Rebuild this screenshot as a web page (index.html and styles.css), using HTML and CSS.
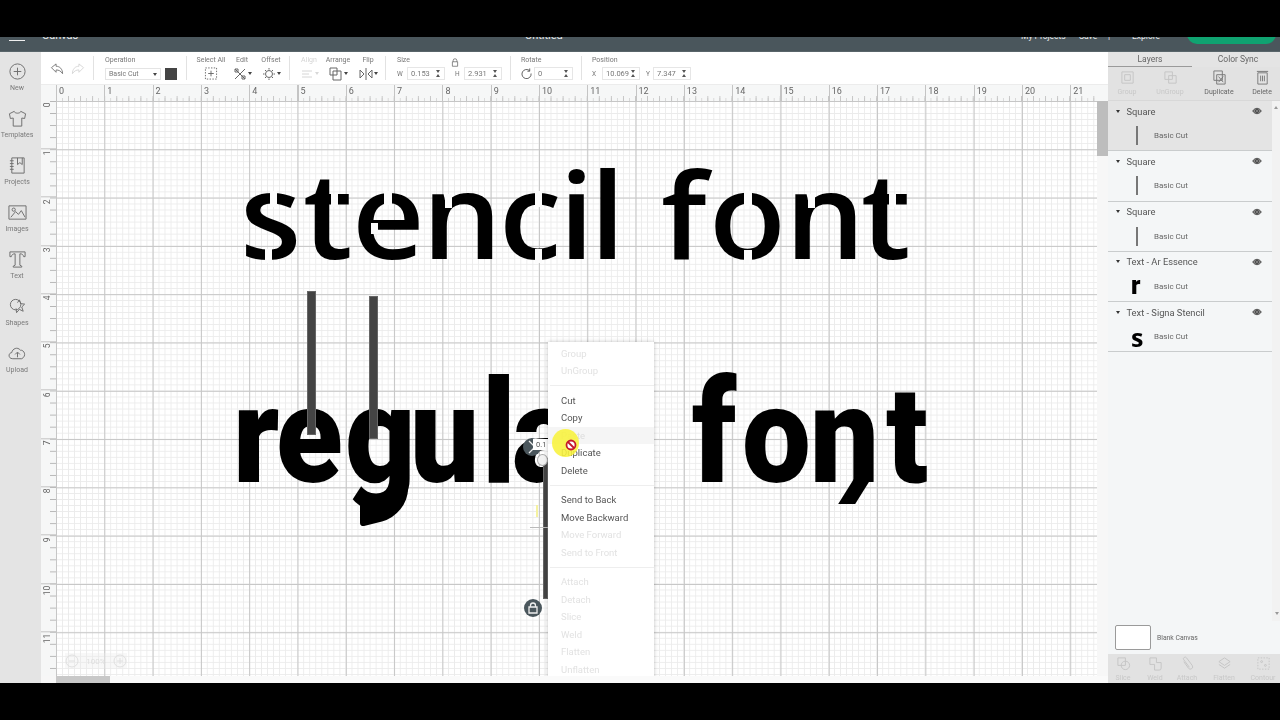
FILE: index.html
```html
<!DOCTYPE html>
<html lang="en">
<head>
<meta charset="utf-8">
<title>Canvas</title>
<link rel="stylesheet" href="styles.css">
</head>
<body>
<div class="app">
  <div class="letterbox-top"></div>
  <header class="topbar">
    <div class="burger"></div>
    <span class="tb-canvas">Canvas</span>
    <span class="tb-title">Untitled</span>
    <span class="tb-link tb-projects">My Projects</span>
    <span class="tb-link tb-save">Save</span>
    <span class="tb-link tb-pipe">|</span>
    <span class="tb-link tb-explore">Explore</span>
    <span class="tb-make">Make It</span>
  </header>
  <main class="main">
    <nav class="sidebar">
      <div class="side-item"><svg viewBox="0 0 20 20" class="side-icon"><circle cx="10" cy="10" r="8"/><path d="M10 6v8M6 10h8"/></svg><span>New</span></div>
      <div class="side-item"><svg viewBox="0 0 20 20" class="side-icon"><path d="M6.5 2.5 1.5 5l1 5 3-.5v8.5h9V9.500l3 .5 1-5-5-2.500c-.5 2.500-6.500 2.500-7 0z"/></svg><span>Templates</span></div>
      <div class="side-item"><svg viewBox="0 0 20 20" class="side-icon"><path d="M4 2h13v16H4zM2 5h4M2 8h4M2 11h4M2 14h4M10 2v7l2.500-2 2.500 2V2"/></svg><span>Projects</span></div>
      <div class="side-item"><svg viewBox="0 0 20 20" class="side-icon"><path d="M1 3h18v14H1zM3 15l5-6 3 3 3-4 4 7"/><circle cx="6" cy="7" r="1.700"/></svg><span>Images</span></div>
      <div class="side-item"><svg viewBox="0 0 20 20" class="side-icon"><path d="M2 2h16v5h-1.500c-.5-2-1.500-3-4-3v12l2 1v1H5.500v-1l2-1V4c-2.500 0-3.500 1-4 3H2z"/></svg><span>Text</span></div>
      <div class="side-item"><svg viewBox="0 0 20 20" class="side-icon"><circle cx="8" cy="8" r="5.500"/><path d="M10 6l2-3 1.500 4 4 .5-3 3 1.500 4.500-4-2-3 3.500-.5-4.500"/></svg><span>Shapes</span></div>
      <div class="side-item"><svg viewBox="0 0 20 20" class="side-icon"><path d="M5 15.500c-5 0-5-6-1-6.500.5-4 6-6.500 9-2.500 4-.5 7 6 1.500 9zM10 14V9M7.500 11 10 8.500l2.500 2.500"/></svg><span>Upload</span></div>
    </nav>
    <section class="workspace">
      <div class="toolbar">
        <div class="group g-undo">
          <svg viewBox="0 0 14 14" class="tool-svg"><path d="M1 5 6 1v2.500c4 0 7 3 7 8-2-3-4-4-7-4V10z"/></svg>
          <svg viewBox="0 0 14 14" class="tool-svg faint"><path d="M13 5 8 1v2.500c-4 0-7 3-7 8 2-3 4-4 7-4V10z"/></svg>
        </div>
        <div class="group g-op">
          <div class="tool tool-left">
            <label class="lab">Operation</label>
            <div class="op-row"><div class="select"><span>Basic Cut</span><i class="tri"></i></div><div class="swatch"></div></div>
          </div>
        </div>
        <div class="group g-edit">
          <div class="tool t-sel"><label class="lab">Select All</label><svg viewBox="0 0 14 14" class="ic14"><path class="dash" d="M1 1h12v12H1z"/><path d="M7 4v6M4 7h6"/></svg></div>
          <div class="tool t-edit"><label class="lab">Edit</label><div class="ic-row"><svg viewBox="0 0 14 14" class="ic14"><path d="M2 2l10 10M12 2 2 12M2 2h3v3H2zM9 9h3v3H9z"/></svg><i class="tri"></i></div></div>
          <div class="tool t-off"><label class="lab">Offset</label><div class="ic-row"><svg viewBox="0 0 14 14" class="ic14"><circle cx="7" cy="7" r="3.500"/><path d="M7 1v1.500M7 11.500V13M1 7h1.500M11.500 7H13M3 3l1 1M10 10l1 1M11 3l-1 1M4 10l-1 1"/></svg><i class="tri"></i></div></div>
        </div>
        <div class="group g-arr">
          <div class="tool t-align"><label class="lab off">Align</label><div class="ic-row"><svg viewBox="0 0 14 14" class="ic14 faint"><path d="M2 4h10M2 7h7M2 10h10"/></svg><i class="tri faint-tri"></i></div></div>
          <div class="tool t-arrange"><label class="lab">Arrange</label><div class="ic-row"><svg viewBox="0 0 14 14" class="ic14"><path d="M1 1h7v7H1zM4 4h8v9H4z"/></svg><i class="tri"></i></div></div>
          <div class="tool t-flip"><label class="lab">Flip</label><div class="ic-row"><svg viewBox="0 0 14 14" class="ic14"><path d="M7 1v12M1 3l4 4-4 4zM13 3 9 7l4 4z"/></svg><i class="tri"></i></div></div>
        </div>
        <div class="group g-size">
          <div class="tool tool-left">
            <label class="lab">Size</label>
            <div class="field-row">
              <span class="axis">W</span><div class="num"><span>0.153</span><i class="spin"></i></div>
              <span class="axis axis-h">H</span><div class="num"><span>2.931</span><i class="spin"></i></div>
            </div>
          </div>
          <svg viewBox="0 0 10 12" class="lock"><path d="M2.500 5V3.500a2.500 2.500 0 0 1 5 0V5M1.500 5h7v6h-7z"/></svg>
        </div>
        <div class="group g-rot">
          <div class="tool tool-left">
            <label class="lab">Rotate</label>
            <div class="field-row">
              <svg viewBox="0 0 12 12" class="rot-ic"><path d="M9.500 3A5 5 0 1 0 11 6M9.500 .5V3.500H7"/></svg>
              <div class="num num-r"><span>0</span><i class="spin"></i></div>
            </div>
          </div>
        </div>
        <div class="group g-pos">
          <div class="tool tool-left">
            <label class="lab">Position</label>
            <div class="field-row">
              <span class="axis">X</span><div class="num"><span>10.069</span><i class="spin"></i></div>
              <span class="axis axis-y">Y</span><div class="num"><span>7.347</span><i class="spin"></i></div>
            </div>
          </div>
        </div>
      </div>
      <div class="board">
        <div class="corner"></div>
        <div class="ruler-top">
          <span>0</span><span>1</span><span>2</span><span>3</span><span>4</span><span>5</span><span>6</span><span>7</span><span>8</span><span>9</span><span>10</span><span>11</span><span>12</span><span>13</span><span>14</span><span>15</span><span>16</span><span>17</span><span>18</span><span>19</span><span>20</span><span>21</span>
        </div>
        <div class="vscroll-top"></div>
        <div class="ruler-left">
          <span>0</span><span>1</span><span>2</span><span>3</span><span>4</span><span>5</span><span>6</span><span>7</span><span>8</span><span>9</span><span>10</span><span>11</span>
        </div>
        <div class="canvas">
          <div class="stage">
            <div class="word sten"><span class="g s1">s</span><span class="g s2">t</span><span class="g s3">e</span><span class="g s4">n</span><span class="g s5">c</span><span class="g s6">i</span><span class="g s7">l</span><span class="g s8">f</span><span class="g s9">o</span><span class="g s10">n</span><span class="g s11">t</span></div>
            <i class="cut c1"></i><i class="cut c2"></i><i class="cut c3"></i><i class="cut c4"></i><i class="cut c5"></i><i class="cut c6"></i><i class="cut c7"></i><i class="cut c8"></i><i class="cut c9"></i><i class="cut c10"></i><i class="cut c11"></i><i class="cut c12"></i>
            <div class="word reg"><span class="g r1">r</span><span class="g r2">e</span><span class="g r3">g</span><span class="g r4">u</span><span class="g r5 tall">l</span><span class="g r6">a</span><span class="g r7">r</span><span class="g r8 tall">f</span><span class="g r9">o</span><span class="g r10">n</span><span class="g r11">t</span></div>
            <i class="tail"></i><i class="hook"></i>
            <i class="bar bar1"></i><i class="bar bar2"></i><i class="bar bar3"></i>
            <i class="guide"></i><i class="spark"></i>
            <div class="handle h-rot"><svg viewBox="0 0 18 18"><path d="M6 3l6 6-6 6"/></svg></div>
            <div class="dim">0.1</div>
            <i class="h-white"></i>
            <div class="handle h-lock"><svg viewBox="0 0 18 18"><path d="M6.500 8V6.500a2.500 2.500 0 0 1 5 0V8M5 8h8v6H5z"/></svg></div>
            <div class="zoombox"><svg viewBox="0 0 14 14" class="z-ic"><circle cx="7" cy="7" r="6"/><path d="M4 7h6"/></svg><span>100%</span><svg viewBox="0 0 14 14" class="z-ic"><circle cx="7" cy="7" r="6"/><path d="M4 7h6M7 4v6"/></svg></div>
            <div class="menu">
              <div class="mi off">Group</div>
              <div class="mi off">UnGroup</div>
              <hr class="sep">
              <div class="mi">Cut</div>
              <div class="mi">Copy</div>
              <div class="mi off hov">Paste</div>
              <div class="mi">Duplicate</div>
              <div class="mi">Delete</div>
              <hr class="sep">
              <div class="mi">Send to Back</div>
              <div class="mi">Move Backward</div>
              <div class="mi off">Move Forward</div>
              <div class="mi off">Send to Front</div>
              <hr class="sep">
              <div class="mi off">Attach</div>
              <div class="mi off">Detach</div>
              <div class="mi off">Slice</div>
              <div class="mi off">Weld</div>
              <div class="mi off">Flatten</div>
              <div class="mi off">Unflatten</div>
            </div>
            <i class="pointer"></i>
            <svg viewBox="0 0 12 12" class="noentry"><circle cx="6" cy="6" r="4.500"/><path d="M3 3l6 6"/></svg>
          </div>
        </div>
        <div class="vscroll"><i class="vthumb"></i></div>
        <div class="hscroll-corner"></div>
        <div class="hscroll"><i class="hthumb"></i></div>
        <div class="hscroll-end"></div>
      </div>
    </section>
    <aside class="panel">
      <div class="tabs"><div class="tab active">Layers</div><div class="tab tab-2">Color Sync</div></div>
      <div class="actions">
        <div class="act off"><svg viewBox="0 0 16 16"><path d="M2 2h12v12H2zM5 5h6v6H5z"/></svg><span>Group</span></div>
        <div class="act off"><svg viewBox="0 0 16 16"><path d="M2 2h8v8H2zM6 6h8v8H6z"/></svg><span>UnGroup</span></div>
        <div class="act"><svg viewBox="0 0 16 16"><path d="M2 1h9v10H2zM5 5h9v10H5zM7 7l5 6M12 7l-5 6"/></svg><span>Duplicate</span></div>
        <div class="act"><svg viewBox="0 0 16 16"><path d="M3 3h10v12H3zM2 1.500h12M6 6v6M8 6v6M10 6v6"/></svg><span>Delete</span></div>
      </div>
      <div class="layers-wrap">
        <div class="layers">
          <div class="layer sel"><div class="l-head"><i class="caret"></i><span class="l-name">Square</span><svg viewBox="0 0 14 10" class="eye"><path d="M1 5c3-5 9-5 12 0-3 5-9 5-12 0z"/><circle cx="7" cy="5" r="2.200"/></svg></div><div class="l-sub"><div class="thumb"><i class="vline"></i></div><span>Basic Cut</span></div></div>
          <div class="layer"><div class="l-head"><i class="caret"></i><span class="l-name">Square</span><svg viewBox="0 0 14 10" class="eye"><path d="M1 5c3-5 9-5 12 0-3 5-9 5-12 0z"/><circle cx="7" cy="5" r="2.200"/></svg></div><div class="l-sub"><div class="thumb"><i class="vline"></i></div><span>Basic Cut</span></div></div>
          <div class="layer"><div class="l-head"><i class="caret"></i><span class="l-name">Square</span><svg viewBox="0 0 14 10" class="eye"><path d="M1 5c3-5 9-5 12 0-3 5-9 5-12 0z"/><circle cx="7" cy="5" r="2.200"/></svg></div><div class="l-sub"><div class="thumb"><i class="vline"></i></div><span>Basic Cut</span></div></div>
          <div class="layer"><div class="l-head"><i class="caret"></i><span class="l-name">Text - Ar Essence</span><svg viewBox="0 0 14 10" class="eye"><path d="M1 5c3-5 9-5 12 0-3 5-9 5-12 0z"/><circle cx="7" cy="5" r="2.200"/></svg></div><div class="l-sub"><div class="thumb th-r">r</div><span>Basic Cut</span></div></div>
          <div class="layer"><div class="l-head"><i class="caret"></i><span class="l-name">Text - Signa Stencil</span><svg viewBox="0 0 14 10" class="eye"><path d="M1 5c3-5 9-5 12 0-3 5-9 5-12 0z"/><circle cx="7" cy="5" r="2.200"/></svg></div><div class="l-sub"><div class="thumb th-s">s</div><span>Basic Cut</span></div></div>
        </div>
        <div class="l-scroll"><i class="arr-up"></i><i class="arr-down"></i></div>
      </div>
      <div class="blank"><div class="blank-box"></div><span>Blank Canvas</span></div>
      <div class="ops">
        <div class="act off"><svg viewBox="0 0 16 16"><path d="M2 2h8v8H2z"/><circle cx="10" cy="10" r="4.500"/></svg><span>Slice</span></div>
        <div class="act off"><svg viewBox="0 0 16 16"><path d="M2 2h7v5h5v6a2 2 0 0 1-2 2H7V9H2z"/></svg><span>Weld</span></div>
        <div class="act off"><svg viewBox="0 0 16 16"><path d="M4 6l5 7a2.500 2.500 0 0 0 4-3L7 2a1.500 1.500 0 0 0-3 2l6 8"/></svg><span>Attach</span></div>
        <div class="act off"><svg viewBox="0 0 16 16"><path d="M8 2l6 4-6 4-6-4zM2 9l6 4 6-4"/></svg><span>Flatten</span></div>
        <div class="act off"><svg viewBox="0 0 16 16"><path class="dash" d="M2 2h12v12H2z"/><circle cx="6" cy="6" r="1"/><circle cx="10" cy="10" r="1"/></svg><span>Contour</span></div>
      </div>
    </aside>
  </main>
  <div class="letterbox-bottom"></div>
</div>
</body>
</html>
```
FILE: styles.css
```css
* { box-sizing: border-box; }
html, body { margin: 0; height: 100%; background: #000; }
body { font-family: Roboto, "Liberation Sans", sans-serif; color: #555; overflow: hidden; }
i { display: block; }
svg { display: block; fill: none; stroke: #666; stroke-width: 1; }
.app { position: relative; width: 1280px; height: 720px; padding-top: 20px; display: flex; flex-direction: column; overflow: hidden; }
.letterbox-top { position: absolute; left: 0; top: 0; width: 100%; height: 37px; background: #000; z-index: 20; }
.letterbox-bottom { height: 37px; flex: none; background: #000; position: relative; z-index: 20; }

.topbar { height: 32px; flex: none; background: #4a565c; border-bottom: 1px solid #59656a; position: relative; color: #e8eaeb; font-size: 8.500px; }
.burger { position: absolute; left: 9px; top: 19.500px; width: 16px; height: 1.500px; background: #f0f0f0; }
.topbar span { position: absolute; top: 10px; line-height: 12px; }
.topbar .tb-canvas { left: 42px; font-size: 11px; }
.topbar .tb-title { left: 525px; font-size: 11px; }
.tb-projects { left: 1021px; }
.tb-save { left: 1079px; }
.tb-pipe { left: 1108px; }
.tb-explore { left: 1132px; }
.topbar .tb-make { left: 1187px; top: 3px; width: 89px; height: 21px; line-height: 21px; text-align: center; background: #10a371; border-radius: 10px; color: #dff3ec; }

.main { flex: 1; min-height: 0; display: flex; filter: blur(.3px); }
.sidebar { width: 41px; flex: none; background: #e4e4e4; padding-top: 10px; display: flex; flex-direction: column; position: relative; z-index: 3; }
.side-item { height: 47px; flex: none; display: flex; flex-direction: column; align-items: center; margin-right: 7px; font-size: 7px; color: #7a7a7a; line-height: 9px; white-space: nowrap; }
.side-icon { width: 19px; height: 19px; margin-bottom: 3px; stroke: #6d6d6d; flex: none; }

.workspace { flex: 1; min-width: 0; display: flex; flex-direction: column; }
.toolbar { height: 33px; flex: none; background: #fff; display: flex; align-items: center; border-bottom: 1px solid #ececec; }
.group { height: 24px; display: flex; border-right: 1px solid #e2e2e2; flex: none; position: relative; }
.g-undo { width: 53px; padding: 7px 0 0 9px; gap: 7px; }
.tool-svg { width: 14px; height: 13px; stroke: #777; }
.faint { stroke: #d6d6d6; }
.g-op { width: 93px; padding-left: 11px; }
.g-edit { width: 103px; padding-left: 10px; }
.g-arr { width: 96px; padding-left: 9px; }
.g-size { width: 125px; padding-left: 11px; }
.g-rot { width: 71px; padding-left: 10px; }
.g-pos { padding-left: 10px; border-right: 0; }
.tool { display: flex; flex-direction: column; align-items: center; }
.tool-left { align-items: flex-start; }
.lab { font-size: 7px; line-height: 9px; color: #777; white-space: nowrap; }
.lab.off { color: #d4d4d4; }
.op-row { display: flex; gap: 4px; margin-top: 3px; }
.select { width: 56px; height: 12px; border: 1px solid #e4e4e4; display: flex; align-items: center; justify-content: space-between; padding: 0 3px; font-size: 7px; color: #777; }
.swatch { width: 12px; height: 12px; background: #444; }
.tri { width: 0; height: 0; border-left: 2.500px solid transparent; border-right: 2.500px solid transparent; border-top: 3.500px solid #444; }
.faint-tri { border-top-color: #d8d8d8; }
.ic14 { width: 14px; height: 14px; margin-top: 2px; }
.ic-row { display: flex; align-items: center; gap: 1px; }
.dash { stroke-dasharray: 1.500 1.500; }
.t-sel { width: 28px; margin-right: 6px; }
.t-edit { width: 22px; margin-right: 5px; }
.t-off { width: 26px; }
.t-align { width: 20px; margin-right: 7px; }
.t-arrange { width: 24px; margin-right: 8px; }
.t-flip { width: 20px; }
.field-row { display: flex; align-items: center; margin-top: 2px; font-size: 7.500px; color: #777; }
.axis { width: 10px; font-size: 6.500px; }
.axis-h { margin-left: 10px; width: 9px; }
.axis-y { margin-left: 6px; width: 7px; }
.num { width: 38px; height: 13px; border: 1px solid #e6e6e6; display: flex; align-items: center; justify-content: space-between; padding: 0 3px; }
.spin { width: 0; height: 7px; position: relative; border-left: 2px solid transparent; border-right: 2px solid transparent; border-top: 3px solid #555; border-bottom: 3px solid #555; margin-right: 1px; }
.lock { position: absolute; left: 65px; top: 2px; width: 8px; height: 9px; stroke: #666; }
.rot-ic { width: 11px; height: 11px; margin-right: 2px; stroke: #555; }
.num-r { width: 39px; }

.board { flex: 1; min-height: 0; display: grid; grid-template-columns: 15px 1fr 11px; grid-template-rows: 16px 1fr 7px; background: #fff; }
.corner { background: #f6f7f7; }
.vscroll-top { background: #f6f7f7; }
.ruler-top { display: flex; overflow: hidden; background-color: #f6f7f7; background-image: repeating-linear-gradient(90deg, #c4c4c4 0 1px, transparent 1px 48.3px), linear-gradient(90deg, #c4c4c4 1px, transparent 1px), linear-gradient(90deg, #d4d4d4 1px, transparent 1px); background-size: 100% 100%, 12.075px 5px, 6.0375px 3px; background-repeat: no-repeat, repeat-x, repeat-x; background-position: 0 0, 0 100%, 0 100%; }
.ruler-top span { width: 48.300px; flex: none; padding-left: 3px; font-size: 9px; line-height: 13px; color: #666; }
.ruler-left { display: flex; flex-direction: column; overflow: hidden; background-color: #f6f7f7; background-image: linear-gradient(#b4b4b4 1px, transparent 1px); background-size: 6px 12.075px; background-repeat: repeat-y; background-position: 100% 0; }
.ruler-left span { height: 48.300px; flex: none; border-top: 1px solid #c4c4c4; writing-mode: vertical-rl; transform: rotate(180deg); font-size: 8.500px; color: #666; line-height: 12px; text-align: right; padding-bottom: 2px; }
.canvas {
  position: relative; overflow: hidden; background-color: #fff;
  background-image:
    linear-gradient(90deg, #c6c6c6 1px, transparent 1px),
    linear-gradient(#c6c6c6 1px, transparent 1px),
    linear-gradient(90deg, #ebebeb 1px, transparent 1px),
    linear-gradient(#ebebeb 1px, transparent 1px);
  background-size: 48.300px 48.300px, 48.300px 48.300px, 6.0375px 6.0375px, 6.0375px 6.0375px;
}
.stage { position: absolute; left: -56px; top: -100px; width: 1280px; height: 720px; }
.word { position: absolute; left: 0; top: 0; color: #000; }
.g { position: absolute; display: block; line-height: 1; }
.sten .g { font-family: "Open Sans", sans-serif; font-weight: 600; font-size: 120px; top: 152px; transform: scaleX(1.05); transform-origin: 0 0; }
.s1 { left: 240px; } .s2 { left: 303px; } .s3 { left: 352px; } .s4 { left: 422px; } .s5 { left: 499px; } .s6 { left: 559px; } .s7 { left: 590px; } .s8 { left: 661px; } .s9 { left: 709px; } .s10 { left: 785px; } .s11 { left: 861px; }
.reg .g { font-family: Roboto, sans-serif; font-weight: 900; font-size: 136px; top: 367px; transform: scaleX(.9); transform-origin: 0 114px; }
.reg .tall { transform: scale(.9, 1.07); }
.r1 { left: 233px; } .r2 { left: 276px; } .r3 { left: 345px; } .r4 { left: 410px; } .r5 { left: 482px; } .r6 { left: 512px; } .r7 { left: 580px; } .r8 { left: 692px; } .r9 { left: 742px; } .r10 { left: 810px; } .r11 { left: 886px; }
.cut { position: absolute; background: #fcfcfc; }
.c1 { left: 270px; top: 190px; width: 7px; height: 16px; }
.c2 { left: 265px; top: 248px; width: 7px; height: 14px; }
.c3 { left: 331px; top: 193px; width: 7px; height: 13px; }
.c4 { left: 384px; top: 190px; width: 8px; height: 14px; }
.c5 { left: 371px; top: 222px; width: 7px; height: 11px; }
.c6 { left: 445px; top: 193px; width: 7px; height: 14px; }
.c7 { left: 535px; top: 190px; width: 7px; height: 16px; }
.c8 { left: 535px; top: 248px; width: 7px; height: 14px; }
.c9 { left: 744px; top: 190px; width: 8px; height: 15px; }
.c10 { left: 744px; top: 249px; width: 8px; height: 14px; }
.c11 { left: 808px; top: 193px; width: 7px; height: 14px; }
.c12 { left: 889px; top: 193px; width: 7px; height: 13px; }
.tail { position: absolute; left: 846px; top: 478px; width: 17px; height: 25px; background: #000; transform: skewX(-32deg); }
.hook { position: absolute; left: 360px; top: 494px; width: 48px; height: 26px; background: #000; border-radius: 0 0 26px 4px; transform: skewY(-14deg); }
.bar { position: absolute; background: #444; border: 1px solid #666; }
.bar1 { left: 307px; top: 290px; width: 9px; height: 144px; }
.bar2 { left: 369px; top: 295px; width: 9px; height: 143px; }
.bar3 { left: 543px; top: 457px; width: 5px; height: 141px; }
.guide { position: absolute; left: 530px; top: 526px; width: 18px; height: 1px; background: #bbb; }
.spark { position: absolute; left: 536px; top: 504px; width: 2px; height: 12px; background: #f5f2a0; }
.handle { position: absolute; width: 18px; height: 18px; border-radius: 50%; background: #4a565c; }
.handle svg { width: 18px; height: 18px; stroke: #eee; stroke-width: 1.300; }
.h-rot { left: 523px; top: 437px; }
.h-lock { left: 524px; top: 598px; }
.dim { position: absolute; left: 533px; top: 438px; width: 16px; height: 11px; background: #fff; font-size: 7.500px; line-height: 11px; padding-left: 3px; color: #555; }
.h-white { position: absolute; left: 537px; top: 453px; width: 11px; height: 12px; border-radius: 50%; background: #f2f2f2; border: 1px solid #aaa; }
.zoombox { position: absolute; left: 65px; top: 652px; width: 62px; height: 16px; display: flex; align-items: center; justify-content: space-between; font-size: 8px; color: #dedede; background: rgba(235,235,235,.35); }
.z-ic { width: 14px; height: 14px; stroke: #e0e0e0; }
.menu { position: absolute; left: 548px; top: 341px; width: 106px; height: 360px; background: #fff; box-shadow: 0 0 4px rgba(0,0,0,.25); padding-top: 2.500px; font-size: 9.500px; }
.mi { height: 17.500px; line-height: 17.500px; padding-left: 13px; color: #555; }
.mi.off { color: #e2e2e2; }
.mi.hov { background: #f5f5f5; color: #ddd; }
.sep { border: 0; border-top: 1px solid #eee; margin: 5.500px 0 5.500px 2px; height: 0; }
.pointer { position: absolute; left: 552px; top: 428px; width: 27px; height: 28px; border-radius: 50%; background: rgba(248,242,60,.88); }
.noentry { position: absolute; left: 565px; top: 438px; width: 12px; height: 12px; stroke: #c5182a; stroke-width: 1.800; fill: #fff; }
.vscroll { background: #f7f7f7; }
.vthumb { height: 55px; background: #bdbdbd; }
.hscroll-corner { background: #f7f7f7; }
.hscroll { background: #fafafa; }
.hthumb { width: 54px; height: 7px; background: #c8c8c8; }
.hscroll-end { background: #fafafa; }

.panel { width: 172px; flex: none; display: flex; flex-direction: column; background: #f4f6f7; position: relative; z-index: 3; }
.tabs { height: 15px; flex: none; display: flex; background: #e4e4e4; }
.tab { flex: 1; text-align: center; font-size: 8.500px; line-height: 14px; color: #666; }
.tab-2 { padding-left: 4px; }
.tab.active { border-bottom: 1px solid #9a9a9a; }
.actions { height: 34px; flex: none; display: flex; background: #e2e2e2; padding-top: 3px; font-size: 7px; color: #666; border-bottom: 1px solid #d8d8d8; }
.act { display: flex; flex-direction: column; align-items: center; line-height: 9px; white-space: nowrap; }
.act svg { width: 15px; height: 15px; margin-bottom: 3px; stroke: #777; }
.act.off { color: #c8c8c8; }
.act.off svg { stroke: #c4c4c4; }
.actions .act:nth-child(1) { width: 38px; }
.actions .act:nth-child(2) { width: 48px; }
.actions .act:nth-child(3) { width: 50px; }
.actions .act:nth-child(4) { width: 36px; }
.layers-wrap { height: 520px; flex: none; display: flex; }
.layers { width: 164px; flex: none; }
.layer { height: 50.300px; border-bottom: 1px solid #c9cccd; }
.layer.sel { background: #e4e4e4; }
.l-head { height: 20px; display: flex; align-items: center; padding: 0 10px 0 8px; font-size: 9.300px; color: #555; }
.caret { width: 0; height: 0; border-left: 2.500px solid transparent; border-right: 2.500px solid transparent; border-top: 3.500px solid #333; margin-right: 6.500px; }
.l-name { flex: 1; }
.eye { width: 10px; height: 8px; stroke: #333; fill: #888; }
.l-sub { height: 29px; display: flex; align-items: center; font-size: 8px; color: #666; }
.thumb { width: 46px; padding-left: 23px; flex: none; color: #000; line-height: 20px; }
.vline { width: 2px; height: 19px; background: #777; margin-left: 5px; }
.th-r { font-family: Roboto, sans-serif; font-weight: 900; font-size: 25px; line-height: 22px; }
.th-s { font-family: "Open Sans", sans-serif; font-weight: 700; font-size: 25px; line-height: 22px; }
.l-scroll { flex: 1; position: relative; background: #f2f2f2; }
.arr-up { position: absolute; left: 2px; top: 5px; width: 0; height: 0; border-left: 2.500px solid transparent; border-right: 2.500px solid transparent; border-bottom: 3px solid #999; }
.arr-down { position: absolute; right: 1px; bottom: 6px; width: 0; height: 0; border-left: 2.500px solid transparent; border-right: 2.500px solid transparent; border-top: 3px solid #999; }
.blank { height: 33px; flex: none; display: flex; align-items: center; padding-left: 7px; font-size: 6.800px; color: #666; gap: 6px; }
.blank-box { width: 36px; height: 25px; background: #fff; border: 1px solid #9a9a9a; border-radius: 2px; }
.ops { flex: 1; display: flex; background: #e2e2e2; padding: 2px 0 0 0; font-size: 7px; }
.ops .act:nth-child(1) { width: 30px; }
.ops .act:nth-child(2) { width: 34px; }
.ops .act:nth-child(3) { width: 30px; }
.ops .act:nth-child(4) { width: 44px; }
.ops .act:nth-child(5) { width: 34px; }
```
